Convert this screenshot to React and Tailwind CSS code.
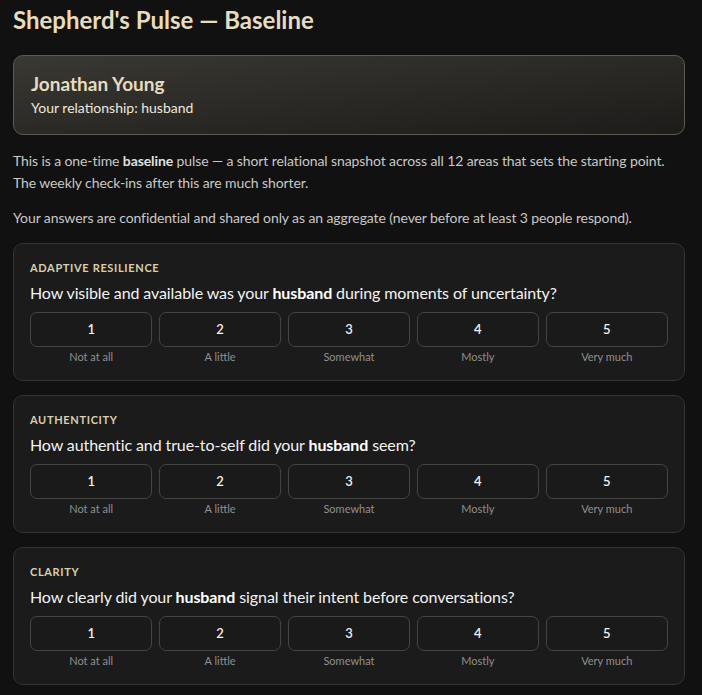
const QUESTIONS = [
  {
    area: "Adaptive Resilience",
    pre: "How visible and available was your ",
    post: " during moments of uncertainty?",
  },
  {
    area: "Authenticity",
    pre: "How authentic and true-to-self did your ",
    post: " seem?",
  },
  {
    area: "Clarity",
    pre: "How clearly did your ",
    post: " signal their intent before conversations?",
  },
];

const SCALE = [
  [1, "Not at all"],
  [2, "A little"],
  [3, "Somewhat"],
  [4, "Mostly"],
  [5, "Very much"],
];

function Question({ q }) {
  return (
    <div className="rounded-[10px] border border-[#333330] bg-[#1b1b1b] px-4 pt-4 pb-[15px]">
      <div className="text-[11px] font-bold uppercase leading-4 tracking-[0.06em] text-[#d9cfae]">
        {q.area}
      </div>
      <div className="mt-[5px] text-[16px] leading-6 tracking-[-0.1px] text-[#f2f2f2]">
        {q.pre}
        <b className="font-bold text-white">husband</b>
        {q.post}
      </div>
      <div className="mt-[7px] grid grid-cols-5 gap-[6.5px]">
        {SCALE.map(([n, label]) => (
          <div key={n} className="flex flex-col items-center">
            <button className="h-[35px] w-full rounded-[7px] border border-[#444441] bg-[#1a1a1a] text-[13px] font-semibold text-[#f0f0f0]">
              {n}
            </button>
            <div className="mt-[2px] text-[11px] leading-4 text-[#8f8f8f]">
              {label}
            </div>
          </div>
        ))}
      </div>
    </div>
  );
}

export default function App() {
  return (
    <div
      className="min-h-screen bg-[#111111] pl-[13px] pr-[17px] pt-[5px] pb-6 text-[#cfcfcf]"
      style={{ fontFamily: "Lato, 'Noto Sans', sans-serif" }}
    >
      <h1 className="text-[24px] font-bold leading-[30px] text-[#e6dcc0]">
        Shepherd's Pulse — Baseline
      </h1>
      <div className="mt-[20px] rounded-[10px] border border-[#5e5a50] bg-gradient-to-br from-[#3a3832] to-[#1d1c1a] px-[17px] pt-[16px] pb-[16px]">
        <div className="text-[19px] font-bold leading-6 text-[#e6dcc0]">
          Jonathan Young
        </div>
        <div className="mt-[2px] text-[14px] leading-5 text-[#ece8dc]">
          Your relationship: husband
        </div>
      </div>
      <p className="mt-[15px] text-[14px] leading-[22px] tracking-[-0.1px] text-[#c8c8c8]">
        This is a one-time <b className="font-bold text-[#e0e0e0]">baseline</b>{" "}
        pulse — a short relational snapshot across all 12 areas that sets the
        starting point.
        <br />
        The weekly check-ins after this are much shorter.
      </p>
      <p className="mt-[13px] text-[14px] leading-[22px] tracking-[-0.1px] text-[#c8c8c8]">
        Your answers are confidential and shared only as an aggregate (never
        before at least 3 people respond).
      </p>
      <div className="mt-[14px] flex flex-col gap-[14px]">
        {QUESTIONS.map((q) => (
          <Question key={q.area} q={q} />
        ))}
      </div>
    </div>
  );
}
